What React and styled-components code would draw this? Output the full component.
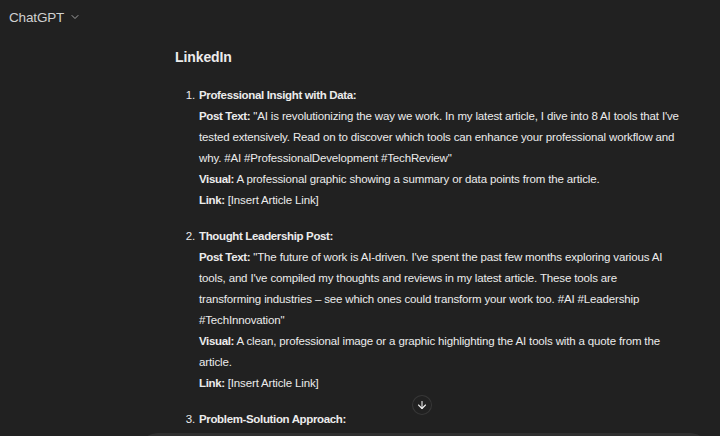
import { createGlobalStyle, styled } from "styled-components"
import { ArrowDown, ChevronDown } from "lucide-react"

const GlobalStyle = createGlobalStyle`
  html, body {
    margin: 0;
    padding: 0;
    background: #212121;
    overflow: hidden;
  }
  body {
    font-family: "Liberation Sans", Arial, sans-serif;
    color: #ececec;
  }
`

const Page = styled.div`
  width: 720px;
  height: 436px;
  overflow: hidden;
  background: #212121;
  display: flex;
  flex-direction: column;
`

const TopBar = styled.header`
  height: 34px;
  flex-shrink: 0;
  display: flex;
  align-items: center;
  padding-left: 9px;
  gap: 5px;
`

const ModelName = styled.span`
  font-size: 13.5px;
  color: #d0d0d0;
  letter-spacing: -0.15px;
`

const Thread = styled.main`
  position: relative;
  padding-left: 175px;
  width: 507px;
  flex-shrink: 0;
`

const Heading = styled.h3`
  margin: 13px 0 18px;
  font-size: 14px;
  line-height: 20px;
  font-weight: 700;
  letter-spacing: -0.1px;
`

const List = styled.ol`
  margin: 0;
  padding-left: 23px;
  font-size: 11.5px;
  line-height: 21px;
  letter-spacing: -0.15px;
  li::marker {
    color: #ececec;
  }
`

const Item = styled.li`
  margin-bottom: ${(p) => (p.$last ? "0" : "15px")};
  padding-left: 1px;
`

const Title = styled.strong`
  font-weight: 700;
  display: block;
  letter-spacing: -0.35px;
`

const Field = styled.div``

const Label = styled.strong`
  font-weight: 700;
  letter-spacing: -0.35px;
`

const ScrollButton = styled.button`
  position: absolute;
  left: 412px;
  top: 361px;
  width: 20px;
  height: 20px;
  border-radius: 50%;
  border: 1px solid rgba(255, 255, 255, 0.1);
  background: #212121;
  color: #ececec;
  display: flex;
  align-items: center;
  justify-content: center;
  padding: 0;
`

const Composer = styled.div`
  margin-top: 3px;
  margin-left: 138px;
  width: 572px;
  height: 52px;
  flex-shrink: 0;
  border-radius: 20px;
  background: #2f2f2f;
`

const posts = [
  {
    title: "Professional Insight with Data:",
    text: "\"AI is revolutionizing the way we work. In my latest article, I dive into 8 AI tools that I've tested extensively. Read on to discover which tools can enhance your professional workflow and why. #AI #ProfessionalDevelopment #TechReview\"",
    visual: "A professional graphic showing a summary or data points from the article.",
  },
  {
    title: "Thought Leadership Post:",
    text: "\"The future of work is AI-driven. I've spent the past few months exploring various AI tools, and I've compiled my thoughts and reviews in my latest article. These tools are transforming industries – see which ones could transform your work too. #AI #Leadership #TechInnovation\"",
    visual: "A clean, professional image or a graphic highlighting the AI tools with a quote from the article.",
  },
]

const App = () => {
  return (
    <Page>
      <GlobalStyle />
      <TopBar>
        <ModelName>ChatGPT</ModelName>
        <ChevronDown size={12} color="#a0a0a0" strokeWidth={2} />
      </TopBar>
      <Thread>
        <Heading>LinkedIn</Heading>
        <List>
          {posts.map((p) => (
            <Item key={p.title}>
              <Title>{p.title}</Title>
              <Field>
                <Label>Post Text:</Label> {p.text}
              </Field>
              <Field>
                <Label>Visual:</Label> {p.visual}
              </Field>
              <Field>
                <Label>Link:</Label> [Insert Article Link]
              </Field>
            </Item>
          ))}
          <Item $last>
            <Title>Problem-Solution Approach:</Title>
          </Item>
        </List>
        <ScrollButton>
          <ArrowDown size={12} strokeWidth={2.2} />
        </ScrollButton>
      </Thread>
      <Composer />
    </Page>
  )
}

export default App
